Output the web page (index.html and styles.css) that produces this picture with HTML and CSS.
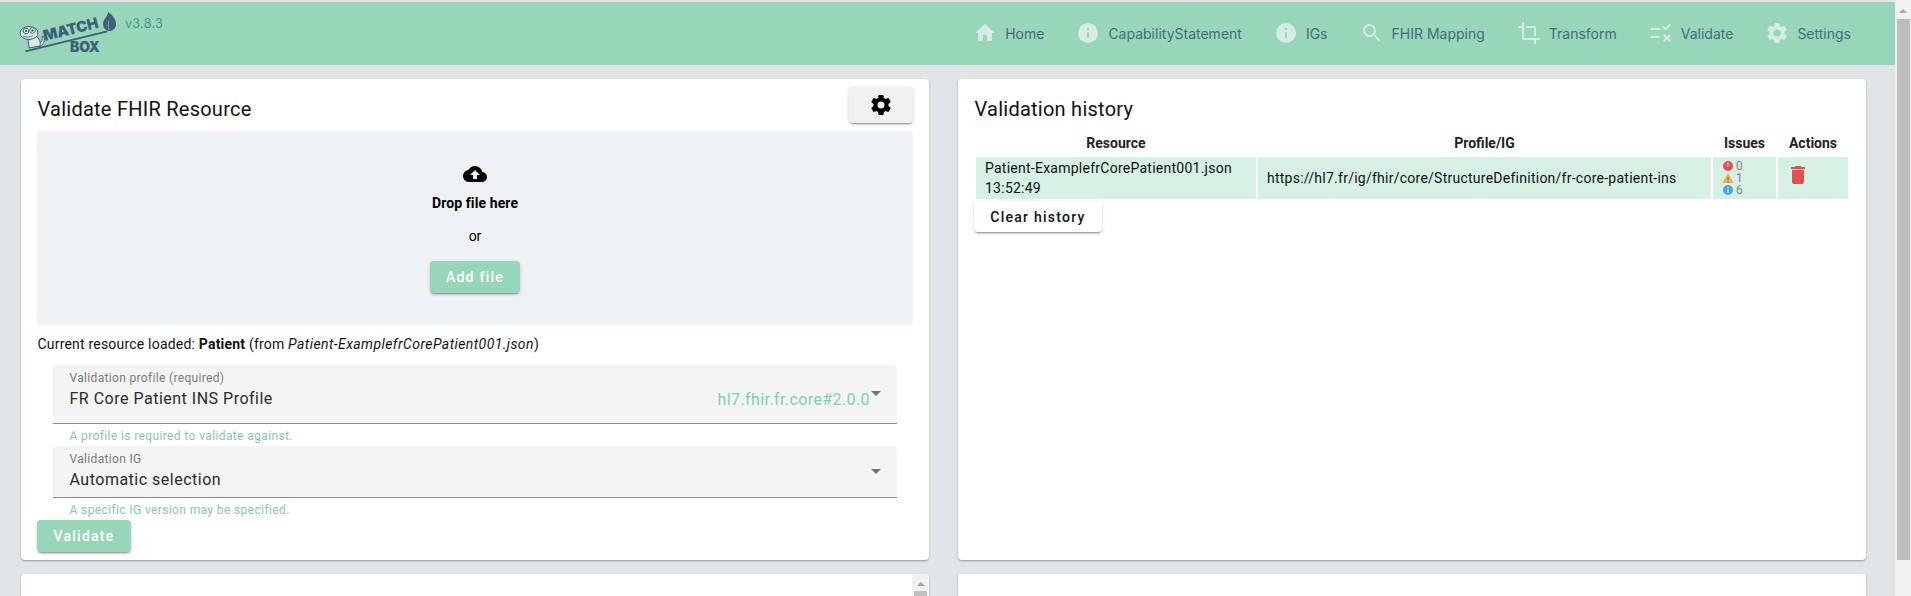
FILE: index.html
```html
<!DOCTYPE html>
<html lang="en">
<head>
<meta charset="utf-8">
<title>Matchbox - Validate</title>
<link rel="stylesheet" href="styles.css">
</head>
<body>
<div class="app">
  <div class="main">
    <header class="topbar">
      <div class="brand">
        <svg class="logo" width="106" height="50" viewBox="0 0 106 50">
          <g fill="#d7ebe3" stroke="#3f5f7c" stroke-width="1">
            <path d="M20 37c3-1 5-3 4-8l2 1c1 5-1 9-5 10z"/>
            <path d="M10 31l1 10 11-2c1-4-1-8-4-10z"/>
            <ellipse cx="11" cy="26" rx="9" ry="6.500"/>
            <circle cx="8" cy="24" r="2.800" fill="#fff"/>
            <circle cx="14.500" cy="23.500" r="2.800" fill="#fff"/>
          </g>
          <circle cx="8" cy="24" r="1.300" fill="#3f5f7c"/>
          <circle cx="14.500" cy="23.500" r="1.300" fill="#3f5f7c"/>
          <path d="M5 29c3 1.500 7 1.500 10-.500" fill="none" stroke="#3f5f7c" stroke-width=".8"/>
          <path d="M7 43.500L89 23.500l.5 1.700L7.500 45.200z" fill="#3f5f7c"/>
          <path d="M90 24c-5-2-6-7-4-11 2-3 4-5 4-8 5 3 8 8 8 12 0 4-3 7-6 7z" fill="#3f5f7c"/>
          <path d="M91 23c-1-3-1-6 0-9" fill="none" stroke="#98d6ba" stroke-width=".7"/>
          <text class="logo-word" transform="translate(26.500 34) rotate(-13.700)">MATCH</text>
          <text class="logo-word logo-word-box" x="52" y="44.500">BOX</text>
        </svg>
        <span class="version">v3.8.3</span>
      </div>
      <nav class="nav">
        <a class="nav-item"><svg class="nav-icon" viewBox="0 0 24 24"><path d="M10 20v-6h4v6h5v-8h3L12 3 2 12h3v8z"/></svg>Home</a>
        <a class="nav-item"><svg class="nav-icon" viewBox="0 0 24 24"><path d="M12 2a10 10 0 1 0 0 20 10 10 0 0 0 0-20zm1 15h-2v-6h2zm0-8h-2V7h2z"/></svg>CapabilityStatement</a>
        <a class="nav-item"><svg class="nav-icon" viewBox="0 0 24 24"><path d="M12 2a10 10 0 1 0 0 20 10 10 0 0 0 0-20zm1 15h-2v-6h2zm0-8h-2V7h2z"/></svg>IGs</a>
        <a class="nav-item"><svg class="nav-icon" viewBox="0 0 24 24"><path d="M15.500 14h-.79l-.28-.27A6.470 6.470 0 0 0 16 9.500 6.500 6.500 0 1 0 9.500 16c1.610 0 3.090-.59 4.230-1.570l.27.28v.79l5 4.990L20.490 19zm-6 0a4.500 4.500 0 1 1 0-9 4.500 4.500 0 0 1 0 9z"/></svg>FHIR Mapping</a>
        <a class="nav-item"><svg class="nav-icon" viewBox="0 0 24 24"><path d="M7 17V1H5v4H1v2h4v10c0 1.100.9 2 2 2h10v4h2v-4h4v-2zm10-2h2V7c0-1.100-.9-2-2-2H9v2h8z"/></svg>Transform</a>
        <a class="nav-item"><svg class="nav-icon" viewBox="0 0 24 24"><path d="M2 7h9v2H2zm0 8h9v2H2zm14.500-5.500L13 6l1.400-1.400 2.100 2.100 4.200-4.200L22.100 3.900zM22 14.400 20.600 13 18 15.600 15.400 13 14 14.400l2.600 2.600-2.600 2.600 1.400 1.400 2.600-2.600 2.600 2.600 1.400-1.400-2.600-2.600z"/></svg>Validate</a>
        <a class="nav-item"><svg class="nav-icon" viewBox="0 0 24 24"><path d="M19.430 12.980c.04-.32.07-.64.07-.98s-.03-.66-.07-.98l2.110-1.650c.19-.15.24-.42.12-.64l-2-3.460c-.12-.22-.39-.3-.61-.22l-2.490 1c-.52-.4-1.080-.73-1.690-.98l-.38-2.650A.49.490 0 0 0 14 2h-4c-.25 0-.46.180-.49.420l-.38 2.650c-.61.250-1.170.59-1.690.98l-2.490-1c-.23-.09-.49 0-.61.220l-2 3.460c-.13.220-.07.490.12.640l2.110 1.650c-.04.320-.07.650-.07.980s.03.660.07.980l-2.110 1.650c-.19.150-.24.420-.12.640l2 3.460c.12.220.39.300.61.220l2.490-1c.52.400 1.080.730 1.690.980l.38 2.650c.03.240.24.420.49.420h4c.25 0 .46-.180.49-.420l.38-2.650c.61-.250 1.170-.590 1.690-.980l2.490 1c.23.090.49 0 .61-.220l2-3.460c.12-.220.07-.490-.12-.640zM12 15.500a3.500 3.500 0 1 1 0-7 3.500 3.500 0 0 1 0 7z"/></svg>Settings</a>
      </nav>
    </header>

    <main class="grid">
      <section class="card card-form">
        <div class="card-head">
          <h2 class="card-title">Validate FHIR Resource</h2>
          <button class="btn btn-gear" aria-label="Settings"><svg class="gear" viewBox="0 0 24 24"><path d="M19.430 12.980c.04-.32.07-.64.07-.98s-.03-.66-.07-.98l2.110-1.650c.19-.15.24-.42.12-.64l-2-3.460c-.12-.22-.39-.3-.61-.22l-2.490 1c-.52-.4-1.080-.73-1.690-.98l-.38-2.650A.49.490 0 0 0 14 2h-4c-.25 0-.46.180-.49.420l-.38 2.650c-.61.250-1.170.59-1.690.98l-2.490-1c-.23-.09-.49 0-.61.220l-2 3.460c-.13.220-.07.490.12.640l2.110 1.650c-.04.320-.07.650-.07.980s.03.660.07.980l-2.110 1.650c-.19.150-.24.420-.12.640l2 3.460c.12.220.39.300.61.220l2.490-1c.52.400 1.080.730 1.690.980l.38 2.650c.03.240.24.420.49.420h4c.25 0 .46-.180.49-.420l.38-2.650c.61-.250 1.170-.590 1.690-.980l2.490 1c.23.090.49 0 .61-.220l2-3.460c.12-.220.07-.490-.12-.640zM12 15.500a3.500 3.500 0 1 1 0-7 3.500 3.500 0 0 1 0 7z"/></svg></button>
        </div>
        <div class="dropzone">
          <svg class="cloud" viewBox="0 0 24 24"><path d="M19.350 10.040A7.490 7.490 0 0 0 12 4C9.110 4 6.600 5.640 5.350 8.040A5.994 5.994 0 0 0 0 14c0 3.310 2.690 6 6 6h13c2.760 0 5-2.240 5-5 0-2.640-2.050-4.780-4.650-4.960zM14 13v4h-4v-4H7l5-5 5 5z"/></svg>
          <div class="drop-title">Drop file here</div>
          <div class="drop-or">or</div>
          <button class="btn btn-green">Add file</button>
        </div>
        <p class="loaded">Current resource loaded: <b>Patient</b> (from <i class="loaded-file">Patient-ExamplefrCorePatient001.json</i>)</p>
        <div class="field field-tall">
          <div class="field-box">
            <div class="field-text">
              <span class="field-label">Validation profile (required)</span>
              <span class="field-value">FR Core Patient INS Profile</span>
            </div>
            <span class="field-extra">hl7.fhir.fr.core#2.0.0</span>
            <span class="caret"></span>
          </div>
          <div class="field-hint">A profile is required to validate against.</div>
        </div>
        <div class="field">
          <div class="field-box">
            <div class="field-text">
              <span class="field-label">Validation IG</span>
              <span class="field-value">Automatic selection</span>
            </div>
            <span class="caret"></span>
          </div>
          <div class="field-hint">A specific IG version may be specified.</div>
        </div>
        <button class="btn btn-green btn-validate">Validate</button>
      </section>

      <section class="card card-history">
        <h2 class="card-title history-title">Validation history</h2>
        <table class="history">
          <thead>
            <tr><th class="col-res">Resource</th><th class="col-prof">Profile/IG</th><th class="col-iss">Issues</th><th class="col-act">Actions</th></tr>
          </thead>
          <tbody>
            <tr>
              <td class="cell-res">Patient-ExamplefrCorePatient001.json<br>13:52:49</td>
              <td class="cell-prof">https://hl7.fr/ig/fhir/core/StructureDefinition/fr-core-patient-ins</td>
              <td class="cell-iss">
                <div class="issue"><svg class="issue-icon" viewBox="0 0 12 12"><circle cx="6" cy="6" r="5" fill="#dc5350"/><rect x="5.300" y="2.500" width="1.400" height="4" fill="#f3c9c8"/></svg>0</div>
                <div class="issue"><svg class="issue-icon" viewBox="0 0 12 12"><path d="M6 1l5.800 10H.200z" fill="#f4ad52"/><rect x="5.400" y="5" width="1.200" height="3" fill="#8a6a3a"/><rect x="5.400" y="9" width="1.200" height="1.200" fill="#8a6a3a"/></svg>1</div>
                <div class="issue"><svg class="issue-icon" viewBox="0 0 12 12"><circle cx="6" cy="6" r="5" fill="#4da3e6"/><rect x="5.300" y="5" width="1.400" height="4" fill="#d3e8f8"/><rect x="5.300" y="3" width="1.400" height="1.200" fill="#d3e8f8"/></svg>6</div>
              </td>
              <td class="cell-act"><svg class="trash" viewBox="0 0 24 24"><path d="M6 19c0 1.100.9 2 2 2h8c1.100 0 2-.9 2-2V7H6zM19 4h-3.500l-1-1h-5l-1 1H5v2h14z"/></svg></td>
            </tr>
          </tbody>
        </table>
        <button class="btn btn-white">Clear history</button>
      </section>

      <section class="card card-lower">
        <div class="inner-scroll"><span class="arrow-up arrow-up-inner"></span><span class="inner-thumb"></span></div>
      </section>
      <section class="card card-lower"></section>
    </main>
  </div>
  <aside class="page-scroll"><span class="arrow-up"></span><span class="page-thumb"></span></aside>
</div>
</body>
</html>
```

FILE: styles.css
```css
* { box-sizing: border-box; }
html, body { margin: 0; height: 100%; overflow: hidden; }
body { background: #e0e5e8; font-family: Roboto, "Liberation Sans", sans-serif; font-size: 14px; color: #000; }

.app { display: flex; height: 596px; overflow: hidden; }
.main { flex: 1; min-width: 0; padding-top: 2px; }

.topbar { height: 63px; background: #98d6ba; display: flex; align-items: flex-start; justify-content: space-between; padding: 0 44px 0 18px; }
.brand { display: flex; align-items: flex-start; padding-top: 5px; }
.logo-word { font-family: Inter, sans-serif; font-weight: 900; font-size: 15px; fill: #3f5f7c; letter-spacing: -.2px; }
.logo-word-box { font-size: 14px; }
.version { font-family: Inter, sans-serif; font-size: 12.500px; color: #42988f; margin: 9px 0 0 1px; letter-spacing: .3px; }
.nav { display: flex; gap: 32px; padding-top: 19px; }
.nav-item { display: flex; align-items: center; gap: 8px; font-family: Inter, sans-serif; font-size: 14px; color: #486a80; height: 24px; }
.nav-icon { width: 24px; height: 24px; fill: #d5ebe3; }

.grid { display: grid; grid-template-columns: 908px 908px; column-gap: 29px; row-gap: 14px; padding: 14px 0 0 21px; grid-template-rows: 481px 200px; }
.card { background: #fff; border-radius: 4px; box-shadow: 0 1px 2px rgba(0,0,0,.35); position: relative; }
.card-form { padding: 8px 16px 0; }
.card-history { padding: 0 16px; }

.card-head { display: flex; justify-content: space-between; align-items: flex-start; height: 44px; }
.card-title { margin: 0; font-size: 20px; font-weight: 400; line-height: 28px; letter-spacing: .25px; color: #111; padding: 8px 0 0 .5px; }
.history-title { padding: 16px 0 0 .5px; }

.btn { font-family: Roboto, sans-serif; font-size: 14px; font-weight: 500; letter-spacing: 1.250px; border: 0; border-radius: 4px; height: 32px; box-shadow: 0 2px 2px -1px rgba(0,0,0,.4), 0 1px 4px rgba(0,0,0,.14); cursor: pointer; padding: 0; }
.btn-gear { width: 64px; height: 36px; background: #f1f1f1; display: flex; align-items: center; justify-content: center; }
.gear { width: 24px; height: 24px; fill: #000; }
.btn-green { background: #98d6ba; color: #fff; padding-bottom: 1px; }
.btn-white { background: #fff; color: #111; width: 128px; height: 31px; display: block; margin-top: 0; }

.dropzone { background: #eef2f5; border-radius: 4px; height: 194px; display: flex; flex-direction: column; align-items: center; padding-top: 31px; }
.cloud { width: 24px; height: 24px; fill: #000; }
.drop-title { font-weight: 700; line-height: 20px; margin-top: 7px; letter-spacing: .1px; }
.drop-or { margin-top: 13px; line-height: 20px; }
.dropzone .btn-green { width: 90px; margin-top: 15px; }

.loaded { margin: 0; padding: 9px 0 0 .5px; height: 40px; line-height: 20px; color: #111; letter-spacing: .2px; }
.loaded-file { letter-spacing: .42px; }

.field { margin: 0 16px; }
.field-box { background: #f4f4f4; border-radius: 4px 4px 0 0; border-bottom: 1px solid #8a8a8a; height: 52px; display: flex; align-items: center; padding: 0 16px 0 16.500px; }
.field-tall .field-box { height: 59px; align-items: flex-start; }
.field-text { flex: 1; display: flex; flex-direction: column; padding-top: 5px; }
.field-box .field-text { align-self: flex-start; }
.field-label { font-size: 12px; line-height: 16px; color: #7a7a7a; letter-spacing: .33px; }
.field-value { font-size: 16px; line-height: 24px; color: #2a2a2a; letter-spacing: .5px; padding-top: 1px; }
.field-extra { font-size: 16px; color: #80d0b0; line-height: 24px; padding-top: 23px; letter-spacing: .4px; margin-right: 1px; }
.caret { width: 0; height: 0; border-left: 5px solid transparent; border-right: 5px solid transparent; border-top: 5px solid #757575; flex: none; }
.field-tall .caret { margin-top: 26px; }
.field-hint { font-size: 12px; line-height: 16px; color: #8cc4aa; letter-spacing: .38px; padding: 4px 0 2px 16.500px; height: 22px; }
.btn-validate { width: 94px; margin-top: 0; display: block; }

.history { border-collapse: separate; border-spacing: 2px; width: 876px; table-layout: fixed; margin-top: 8px; }
.history th { font-size: 14px; font-weight: 700; line-height: 20px; padding: 0; height: 22px; vertical-align: top; color: #222; }
.col-res { width: 280px; }
.col-iss { width: 63px; }
.col-act { width: 70px; }
.history td { background: #d6f0e4; padding: 0 0 0 9px; height: 42px; line-height: 20px; letter-spacing: .25px; color: #111; }
.history .cell-iss { padding-left: 9px; }
.issue { display: flex; align-items: center; gap: 2px; height: 12px; font-size: 12px; line-height: 12px; color: #858585; }
.issue-icon { width: 12px; height: 12px; flex: none; }
.history .cell-act { padding-left: 8px; vertical-align: top; padding-top: 6px; }
.trash { width: 24px; height: 24px; fill: #dc5350; display: block; }

.inner-scroll { position: absolute; top: 0; right: 0; bottom: 0; width: 17px; background: #f1f1f1; border-radius: 0 4px 0 0; }
.arrow-up { display: block; width: 0; height: 0; border-left: 4px solid transparent; border-right: 4px solid transparent; border-bottom: 4px solid #a3a3a3; margin: 9px auto 0; }
.arrow-up-inner { margin-top: 8px; }
.inner-thumb { display: block; height: 60px; width: 13px; margin: 5px auto 0; background: #c1c1c1; }

.page-scroll { width: 16px; flex: none; background: #f1f1f1; }
.page-thumb { display: block; width: 13px; height: 541px; margin: 6px 0 0 2px; background: #bdbdbd; }
```
